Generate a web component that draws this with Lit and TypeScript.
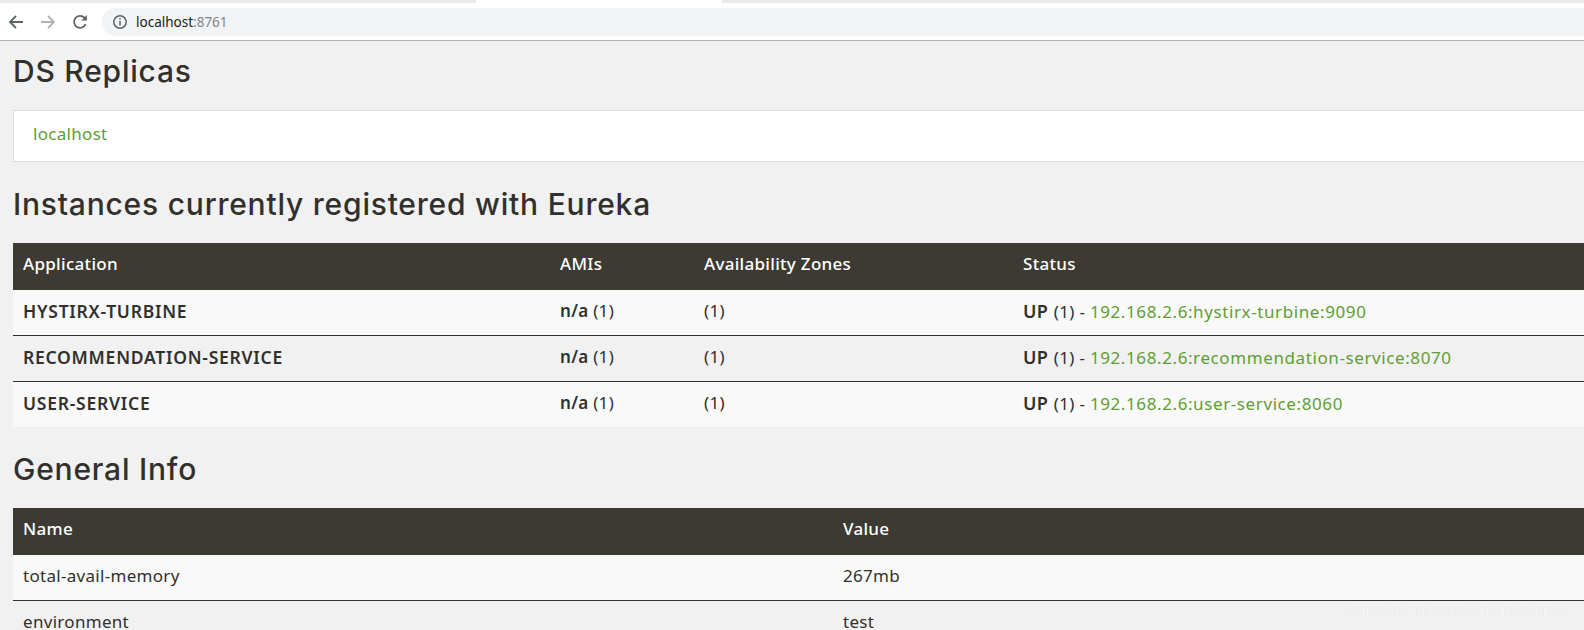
import { LitElement, html, css } from "lit";
import { customElement } from "lit/decorators.js";

const instances = [
  ["HYSTIRX-TURBINE", "192.168.2.6:hystirx-turbine:9090"],
  ["RECOMMENDATION-SERVICE", "192.168.2.6:recommendation-service:8070"],
  ["USER-SERVICE", "192.168.2.6:user-service:8060"],
];

@customElement("app-root")
export class AppRoot extends LitElement {
  static styles = css`
    :host { display: block; position: relative; width: 1584px; height: 630px; overflow: hidden; background: #f1f1f1; font-family: "Noto Sans", sans-serif; font-size: 17px; letter-spacing: 0.3px; color: #32302c; }
    .tabs { height: 3px; background: #e8eaed; display: flex; }
    .tabs .active { margin-left: 476px; width: 246px; background: #fff; }
    .toolbar { height: 37px; background: #fff; display: flex; align-items: center; border-bottom: 1px solid #b4b4b4; box-sizing: content-box; letter-spacing: 0; }
    .nav { width: 102px; display: flex; flex: none; padding-left: 8px; box-sizing: border-box; gap: 16px; }
    .nav svg { width: 16px; height: 16px; display: block; }
    .omni { flex: 1; height: 28px; margin-top: 1px; background: #f1f3f4; border-radius: 14px 0 0 14px; display: flex; align-items: center; padding-left: 10px; gap: 8px; font-size: 13.5px; color: #202124; }
    .omni svg { width: 16px; height: 16px; }
    .omni span { color: #80868b; }
    main { padding-left: 13px; }
    h1 { margin: 0; font-family: "Inter", sans-serif; font-weight: 500; font-size: 30px; line-height: 38px; letter-spacing: 0.78px; }
    .h-ds { padding-top: 11px; }
    .panel { margin-top: 20px; height: 52px; box-sizing: border-box; background: #fff; border: 1px solid #ddd; border-right: 0; padding: 12px 19px; line-height: 21px; }
    a { color: #5f9e33; text-decoration: none; }
    .up a { letter-spacing: 0.6px; }
    .up b { font-size: 18px; font-weight: 600; margin-right: 1px; }
    .h-inst { margin-top: 23px; }
    .h-gen { margin-top: 23px; }
    .table { margin-top: 20px; }
    .row { display: grid; height: 46px; align-items: center; background: #f9f9f9; border-top: 1px solid #32302c; box-sizing: border-box; }
    .row.alt { background: #f1f1f1; }
    .row.head { background: #3d3a34; color: #fff; border-top: 0; font-weight: 500; height: 47px; }
    .inst { grid-template-columns: 537px 144px 319px 1fr; }
    .info { grid-template-columns: 820px 1fr; }
    .row > div { padding: 0 0 4px 10px; white-space: nowrap; }
    .row.head > div { padding-bottom: 6px; }
    .first { border-top: 0; height: 45px; }
    b { font-weight: 600; }
    .name { font-size: 17.5px; letter-spacing: 0.75px; }
    .mark { position: absolute; left: 1348px; top: 603px; font-family: "Liberation Sans", sans-serif; font-size: 15.8px; letter-spacing: 0; color: #f7f7f7; text-shadow: 0 0 1px #dcdcdc; }
  `;

  render() {
    return html`
      <div class="tabs"><div class="active"></div></div>
      <div class="toolbar">
        <div class="nav">
          <svg viewBox="0 0 16 16" fill="none" stroke="#5f6368" stroke-width="1.8"><path d="M15 8H2M8 2 2 8l6 6"/></svg>
          <svg viewBox="0 0 16 16" fill="none" stroke="#b0b3b6" stroke-width="1.8"><path d="M1 8h13M8 2l6 6-6 6"/></svg>
          <svg viewBox="0 0 16 16" fill="none" stroke="#5f6368" stroke-width="1.8"><path d="M13.6 10.2A6 6 0 1 1 12.4 3.6L14.5 5.8"/><path d="M14.8 1v5.4H9.4" fill="#5f6368" stroke="none"/></svg>
        </div>
        <div class="omni">
          <svg viewBox="0 0 16 16" fill="none" stroke="#5f6368" stroke-width="1.5"><circle cx="8" cy="8" r="6.2"/><path d="M8 7v4.5M8 4.2v1.6"/></svg>
          <div>localhost<span>:8761</span></div>
        </div>
      </div>
      <main>
        <h1 class="h-ds">DS Replicas</h1>
        <div class="panel"><a>localhost</a></div>
        <h1 class="h-inst">Instances currently registered with Eureka</h1>
        <div class="table">
          <div class="row head inst"><div>Application</div><div>AMIs</div><div>Availability Zones</div><div>Status</div></div>
          ${instances.map((r, i) => html`
            <div class="row inst ${i === 1 ? "alt" : ""} ${i === 0 ? "first" : ""}">
              <div class="name"><b>${r[0]}</b></div><div><b>n/a</b> (1)</div><div>(1)</div>
              <div class="up"><b>UP</b> (1) - <a>${r[1]}</a></div>
            </div>`)}
        </div>
        <h1 class="h-gen">General Info</h1>
        <div class="table">
          <div class="row head info"><div>Name</div><div>Value</div></div>
          <div class="row info first"><div>total-avail-memory</div><div>267mb</div></div>
          <div class="row info alt"><div>environment</div><div>test</div></div>
        </div>
      </main>
      <div class="mark">https://blog.csdn.net/Developlee</div>
    `;
  }
}
